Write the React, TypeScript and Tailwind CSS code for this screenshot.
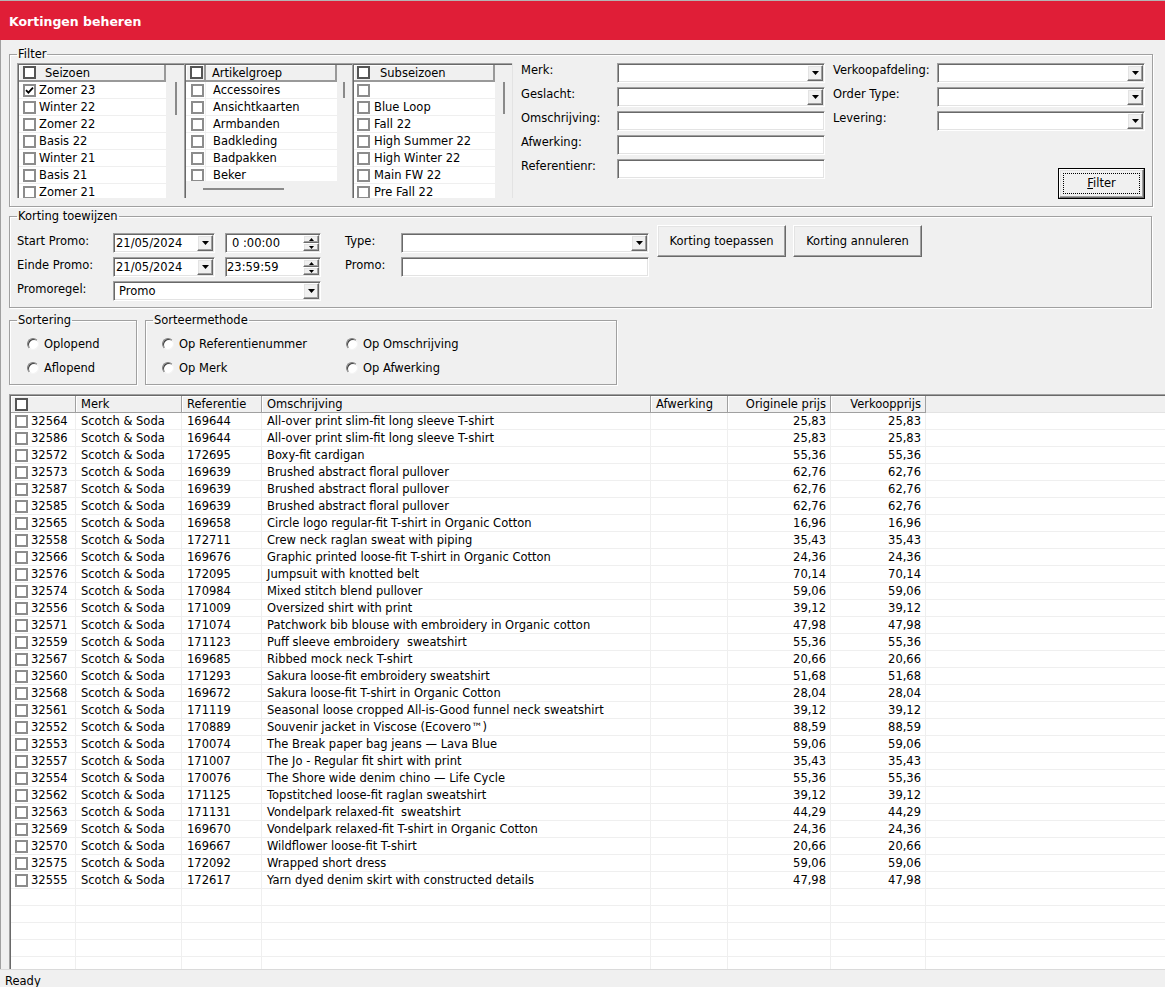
import React from "react";

const sunken =
  "border border-t-[#a0a0a0] border-l-[#a0a0a0] border-b-white border-r-white shadow-[inset_1px_1px_0_#696969,inset_-1px_-1px_0_#e3e3e3]";
const raised =
  "border border-t-white border-l-white border-b-[#696969] border-r-[#696969] shadow-[inset_-1px_-1px_0_#a0a0a0,inset_1px_1px_0_#e3e3e3]";
const group =
  "border border-[#a0a0a0] shadow-[inset_1px_1px_0_#ffffff,1px_1px_0_#ffffff] shrink-0 min-w-0";

function Arrow() {
  return (
    <div className={`w-[16px] h-[16px] shrink-0 bg-[#f0f0f0] ${raised} flex items-center justify-center`}>
      <svg width="7" height="4" viewBox="0 0 7 4">
        <path d="M0 0H7L3.5 4Z" fill="#000" />
      </svg>
    </div>
  );
}

function Combo({ w, value = "", pl = "pl-[3px]" }: { w: string; value?: string; pl?: string }) {
  return (
    <div className={`h-[20px] ${w} shrink-0 bg-white ${sunken} flex items-center pr-[1px]`}>
      <span className={`flex-1 ${pl} whitespace-nowrap overflow-hidden`}>{value}</span>
      <Arrow />
    </div>
  );
}

function TextBox({ w }: { w: string }) {
  return <div className={`h-[20px] ${w} shrink-0 bg-white ${sunken}`} />;
}

function Spin() {
  return (
    <div className="flex flex-col shrink-0">
      <div className={`w-[16px] h-[8px] bg-[#f0f0f0] ${raised} flex items-center justify-center`}>
        <svg width="5" height="3" viewBox="0 0 5 3">
          <path d="M0 3H5L2.5 0Z" fill="#000" />
        </svg>
      </div>
      <div className={`w-[16px] h-[8px] bg-[#f0f0f0] ${raised} flex items-center justify-center`}>
        <svg width="5" height="3" viewBox="0 0 5 3">
          <path d="M0 0H5L2.5 3Z" fill="#000" />
        </svg>
      </div>
    </div>
  );
}

function TimeField({ value, pl }: { value: string; pl: string }) {
  return (
    <div className={`h-[20px] w-[96px] shrink-0 bg-white ${sunken} flex items-center pr-[1px]`}>
      <span className={`flex-1 ${pl} whitespace-nowrap`}>{value}</span>
      <Spin />
    </div>
  );
}

function Check({ checked = false, dark = false }: { checked?: boolean; dark?: boolean }) {
  return (
    <div
      className={`w-[13px] h-[13px] shrink-0 bg-white border-2 ${
        dark ? "border-[#555555]" : "border-[#8c8c8c]"
      } flex items-center justify-center`}
    >
      {checked && (
        <svg width="9" height="9" viewBox="0 0 9 9">
          <path d="M1 4.2L3.4 6.6L8 1.6" stroke="#000" strokeWidth="1.8" fill="none" />
        </svg>
      )}
    </div>
  );
}

function Radio({ label }: { label: string }) {
  return (
    <div className="h-[16px] flex items-center gap-[5px] whitespace-nowrap">
      <div className="w-[12px] h-[12px] rounded-full bg-white border border-t-[#808080] border-l-[#808080] border-b-[#f4f4f4] border-r-[#f4f4f4] shadow-[inset_1px_1px_0_#404040]" />
      <span>{label}</span>
    </div>
  );
}

function WinButton({ label, w }: { label: string; w: string }) {
  return (
    <div className={`${w} h-[32px] shrink-0 bg-[#f0f0f0] ${raised} flex items-center justify-center`}>
      {label}
    </div>
  );
}

type LBProps = {
  w: string;
  title: string;
  items: string[];
  checkedIndex?: number;
  sep?: boolean;
  hScroll?: boolean;
  scrollW: string;
  thumbPl: string;
  thumbH: string;
  rowPl: string;
  textGap: string;
  headPl: string;
  headGap: string;
};

function ListBox(p: LBProps) {
  return (
    <div className={`${p.w} h-full shrink-0 flex border-t border-l border-[#a0a0a0]`}>
      <div className="flex-1 flex border-t border-l border-[#696969] min-w-0">
        <div className="flex-1 min-w-0 flex flex-col">
          <div className="h-[17px] shrink-0 flex items-stretch bg-[#f0f0f0] border-r-2 border-b-2 border-[#999999] shadow-[inset_1px_1px_0_#ffffff]">
            {p.sep ? (
              <>
                <div className="w-[20px] shrink-0 flex items-center pl-[4px] border-r-2 border-[#999999]">
                  <Check dark />
                </div>
                <div className="flex items-center pl-[6px] pt-[1px]">{p.title}</div>
              </>
            ) : (
              <div className={`flex items-center ${p.headPl} ${p.headGap}`}>
                <Check dark />
                <span className="pt-[1px]">{p.title}</span>
              </div>
            )}
          </div>
          <div className={`${p.hScroll ? "h-[99px]" : "flex-1"} min-h-0 overflow-hidden bg-white`}>
            {p.items.map((it, i) =>
              p.sep ? (
                <div key={i} className="h-[17px] flex items-stretch border-b border-[#efefef]">
                  <div className="w-[20px] shrink-0 flex items-center pl-[5px] border-r border-[#efefef]">
                    <Check checked={p.checkedIndex === i} />
                  </div>
                  <div className="flex items-center pl-[7px] whitespace-nowrap">{it}</div>
                </div>
              ) : (
                <div
                  key={i}
                  className={`h-[17px] flex items-center ${p.rowPl} ${p.textGap} border-b border-[#efefef] whitespace-nowrap`}
                >
                  <Check checked={p.checkedIndex === i} />
                  <span>{it}</span>
                </div>
              )
            )}
          </div>
          {p.hScroll && (
            <div className="flex-1 bg-[#f0f0f0] pt-[7px] pl-[17px]">
              <div className="w-[81px] h-[2px] bg-[#8a8a8a]" />
            </div>
          )}
        </div>
        <div className={`${p.scrollW} shrink-0 bg-[#f0f0f0] pt-[17px] ${p.thumbPl}`}>
          <div className={`w-[2px] ${p.thumbH} bg-[#8a8a8a]`} />
        </div>
      </div>
    </div>
  );
}

const rows: [string, string, string, string, string][] = [
  ["32564", "169644", "All-over print slim-fit long sleeve T-shirt", "25,83", "25,83"],
  ["32586", "169644", "All-over print slim-fit long sleeve T-shirt", "25,83", "25,83"],
  ["32572", "172695", "Boxy-fit cardigan", "55,36", "55,36"],
  ["32573", "169639", "Brushed abstract floral pullover", "62,76", "62,76"],
  ["32587", "169639", "Brushed abstract floral pullover", "62,76", "62,76"],
  ["32585", "169639", "Brushed abstract floral pullover", "62,76", "62,76"],
  ["32565", "169658", "Circle logo regular-fit T-shirt in Organic Cotton", "16,96", "16,96"],
  ["32558", "172711", "Crew neck raglan sweat with piping", "35,43", "35,43"],
  ["32566", "169676", "Graphic printed loose-fit T-shirt in Organic Cotton", "24,36", "24,36"],
  ["32576", "172095", "Jumpsuit with knotted belt", "70,14", "70,14"],
  ["32574", "170984", "Mixed stitch blend pullover", "59,06", "59,06"],
  ["32556", "171009", "Oversized shirt with print", "39,12", "39,12"],
  ["32571", "171074", "Patchwork bib blouse with embroidery in Organic cotton", "47,98", "47,98"],
  ["32559", "171123", "Puff sleeve embroidery  sweatshirt", "55,36", "55,36"],
  ["32567", "169685", "Ribbed mock neck T-shirt", "20,66", "20,66"],
  ["32560", "171293", "Sakura loose-fit embroidery sweatshirt", "51,68", "51,68"],
  ["32568", "169672", "Sakura loose-fit T-shirt in Organic Cotton", "28,04", "28,04"],
  ["32561", "171119", "Seasonal loose cropped All-is-Good funnel neck sweatshirt", "39,12", "39,12"],
  ["32552", "170889", "Souvenir jacket in Viscose (Ecovero™)", "88,59", "88,59"],
  ["32553", "170074", "The Break paper bag jeans — Lava Blue", "59,06", "59,06"],
  ["32557", "171007", "The Jo - Regular fit shirt with print", "35,43", "35,43"],
  ["32554", "170076", "The Shore wide denim chino — Life Cycle", "55,36", "55,36"],
  ["32562", "171125", "Topstitched loose-fit raglan sweatshirt", "39,12", "39,12"],
  ["32563", "171131", "Vondelpark relaxed-fit  sweatshirt", "44,29", "44,29"],
  ["32569", "169670", "Vondelpark relaxed-fit T-shirt in Organic Cotton", "24,36", "24,36"],
  ["32570", "169667", "Wildflower loose-fit T-shirt", "20,66", "20,66"],
  ["32575", "172092", "Wrapped short dress", "59,06", "59,06"],
  ["32555", "172617", "Yarn dyed denim skirt with constructed details", "47,98", "47,98"],
];

const cell = "h-full shrink-0 border-r border-[#efefef] flex items-center whitespace-pre overflow-hidden";
const head =
  "h-full shrink-0 border-r border-b border-[#a0a0a0] shadow-[inset_1px_1px_0_#ffffff] flex items-center whitespace-nowrap";

export default function App() {
  return (
    <div className="w-full h-[987px] flex flex-col bg-[#f0f0f0] font-['DejaVu_Sans',sans-serif] text-[11.5px] leading-[13px] text-black overflow-hidden">
      {/* title */}
      <div className="h-[40px] shrink-0 bg-[#e01e37] border-t border-[#b4b4b4] flex items-center pl-[9px] pt-[2px]">
        <span className="text-white font-bold text-[12.5px] leading-[16px]">Kortingen beheren</span>
      </div>

      <div className="flex-1 min-h-0 flex flex-col border-l border-[#a0a0a0] pl-[8px]">
        {/* Filter */}
        <fieldset className={`mt-[8px] w-[1144px] h-[159px] ${group}`}>
          <legend className="ml-[7px] px-[1px] leading-[13px]">Filter</legend>
          <div className="flex items-start pl-[7px] pt-[2px]">
            <div className="flex h-[135px] shrink-0 border-r border-[#e3e3e3]">
              <ListBox
                w="w-[167px]"
                title="Seizoen"
                items={["Zomer 23", "Winter 22", "Zomer 22", "Basis 22", "Winter 21", "Basis 21", "Zomer 21"]}
                checkedIndex={0}
                scrollW="w-[18px]"
                thumbPl="pl-[9px]"
                thumbH="h-[33px]"
                rowPl="pl-[4px]"
                textGap="gap-[3px]"
                headPl="pl-[4px]"
                headGap="gap-[9px]"
              />
              <ListBox
                w="w-[168px]"
                title="Artikelgroep"
                items={["Accessoires", "Ansichtkaarten", "Armbanden", "Badkleding", "Badpakken", "Beker"]}
                sep
                hScroll
                scrollW="w-[15px]"
                thumbPl="pl-[6px]"
                thumbH="h-[16px]"
                rowPl="pl-[5px]"
                textGap="gap-[3px]"
                headPl="pl-[4px]"
                headGap="gap-[9px]"
              />
              <ListBox
                w="w-[160px]"
                title="Subseizoen"
                items={["", "Blue Loop", "Fall 22", "High Summer 22", "High Winter 22", "Main FW 22", "Pre Fall 22"]}
                scrollW="w-[17px]"
                thumbPl="pl-[8px]"
                thumbH="h-[32px]"
                rowPl="pl-[3px]"
                textGap="gap-[4px]"
                headPl="pl-[3px]"
                headGap="gap-[10px]"
              />
            </div>

            <div className="ml-[8px] flex">
              <div className="w-[304px] flex flex-col gap-[4px]">
                <div className="flex items-start">
                  <div className="w-[96px] shrink-0 pt-[1px]">Merk:</div>
                  <Combo w="w-[208px]" />
                </div>
                <div className="flex items-start">
                  <div className="w-[96px] shrink-0 pt-[1px]">Geslacht:</div>
                  <Combo w="w-[208px]" />
                </div>
                <div className="flex items-start">
                  <div className="w-[96px] shrink-0 pt-[1px]">Omschrijving:</div>
                  <TextBox w="w-[208px]" />
                </div>
                <div className="flex items-start">
                  <div className="w-[96px] shrink-0 pt-[1px]">Afwerking:</div>
                  <TextBox w="w-[208px]" />
                </div>
                <div className="flex items-start">
                  <div className="w-[96px] shrink-0 pt-[1px]">Referentienr:</div>
                  <TextBox w="w-[208px]" />
                </div>
              </div>
              <div className="ml-[8px] w-[312px] flex flex-col">
                <div className="flex flex-col gap-[4px]">
                  <div className="flex items-start">
                    <div className="w-[104px] shrink-0 whitespace-nowrap pt-[1px]">Verkoopafdeling:</div>
                    <Combo w="w-[208px]" />
                  </div>
                  <div className="flex items-start">
                    <div className="w-[104px] shrink-0 pt-[1px]">Order Type:</div>
                    <Combo w="w-[208px]" />
                  </div>
                  <div className="flex items-start">
                    <div className="w-[104px] shrink-0 pt-[1px]">Levering:</div>
                    <Combo w="w-[208px]" />
                  </div>
                </div>
                <div className="mt-[37px] self-end w-[87px] h-[31px] border border-black bg-[#f0f0f0]">
                  <div className={`w-full h-full ${raised} p-[3px]`}>
                    <div className="w-full h-full border border-dotted border-black flex items-center justify-center">
                      <span>
                        <span className="underline">F</span>ilter
                      </span>
                    </div>
                  </div>
                </div>
              </div>
            </div>
          </div>
        </fieldset>

        {/* Korting toewijzen */}
        <fieldset className={`mt-[3px] w-[1143px] h-[98px] ${group}`}>
          <legend className="ml-[7px] px-[1px] leading-[13px]">Korting toewijzen</legend>
          <div className="flex items-start pl-[7px]">
            <div className="flex flex-col gap-[4px] pt-[10px]">
              <div className="flex items-start">
                <div className="w-[96px] shrink-0 pt-[2px]">Start Promo:</div>
                <Combo w="w-[102px]" value="21/05/2024" pl="pl-[2px]" />
                <div className="ml-[10px]">
                  <TimeField value="0 :00:00" pl="pl-[6px]" />
                </div>
                <div className="ml-[24px] w-[56px] shrink-0 pt-[2px]">Type:</div>
                <Combo w="w-[248px]" />
              </div>
              <div className="flex items-start">
                <div className="w-[96px] shrink-0 pt-[2px]">Einde Promo:</div>
                <Combo w="w-[102px]" value="21/05/2024" pl="pl-[2px]" />
                <div className="ml-[10px]">
                  <TimeField value="23:59:59" pl="pl-[1px]" />
                </div>
                <div className="ml-[24px] w-[56px] shrink-0 pt-[2px]">Promo:</div>
                <TextBox w="w-[248px]" />
              </div>
              <div className="flex items-start">
                <div className="w-[96px] shrink-0 pt-[2px]">Promoregel:</div>
                <Combo w="w-[208px]" value="Promo" pl="pl-[5px]" />
              </div>
            </div>
            <div className="ml-[8px] mt-[2px] flex gap-[7px]">
              <WinButton label="Korting toepassen" w="w-[129px]" />
              <WinButton label="Korting annuleren" w="w-[129px]" />
            </div>
          </div>
        </fieldset>

        {/* Sortering */}
        <div className="mt-[6px] flex gap-[8px] shrink-0">
          <fieldset className={`w-[128px] h-[71px] ${group}`}>
            <legend className="ml-[7px] px-[1px] leading-[13px]">Sortering</legend>
            <div className="flex flex-col gap-[8px] pt-[9px] pl-[17px]">
              <Radio label="Oplopend" />
              <Radio label="Aflopend" />
            </div>
          </fieldset>
          <fieldset className={`w-[472px] h-[71px] ${group}`}>
            <legend className="ml-[7px] px-[1px] leading-[13px]">Sorteermethode</legend>
            <div className="grid grid-cols-[184px_auto] gap-y-[8px] pt-[9px] pl-[16px]">
              <Radio label="Op Referentienummer" />
              <Radio label="Op Omschrijving" />
              <Radio label="Op Merk" />
              <Radio label="Op Afwerking" />
            </div>
          </fieldset>
        </div>

        {/* Table */}
        <div className="mt-[9px] flex-1 min-h-0 flex border-t border-l border-[#a0a0a0] overflow-hidden">
          <div className="flex-1 min-w-0 flex flex-col border-t border-l border-[#696969] bg-white overflow-hidden">
            <div className="h-[17px] shrink-0 flex bg-[#f0f0f0]">
              <div className={`${head} w-[65px] pl-[4px]`}>
                <Check dark />
              </div>
              <div className={`${head} w-[106px] pl-[5px]`}>Merk</div>
              <div className={`${head} w-[80px] pl-[5px]`}>Referentie</div>
              <div className={`${head} w-[389px] pl-[5px]`}>Omschrijving</div>
              <div className={`${head} w-[77px] pl-[5px]`}>Afwerking</div>
              <div className={`${head} w-[103px] justify-end pr-[4px]`}>Originele prijs</div>
              <div className={`${head} w-[95px] justify-end pr-[4px]`}>Verkoopprijs</div>
              <div className="flex-1 h-full border-b border-[#e3e3e3]" />
            </div>
            <div className="flex-1 min-h-0 overflow-hidden">
              {rows.map((r) => (
                <div key={r[0]} className="h-[17px] flex border-b border-[#efefef]">
                  <div className={`${cell} w-[65px] pl-[4px] gap-[3px]`}>
                    <Check />
                    <span>{r[0]}</span>
                  </div>
                  <div className={`${cell} w-[106px] pl-[5px]`}>Scotch &amp; Soda</div>
                  <div className={`${cell} w-[80px] pl-[5px]`}>{r[1]}</div>
                  <div className={`${cell} w-[389px] pl-[5px]`}>{r[2]}</div>
                  <div className={`${cell} w-[77px]`} />
                  <div className={`${cell} w-[103px] justify-end pr-[4px]`}>{r[3]}</div>
                  <div className={`${cell} w-[95px] justify-end pr-[4px]`}>{r[4]}</div>
                  <div className="flex-1" />
                </div>
              ))}
              {[0, 1, 2, 3, 4, 5].map((i) => (
                <div key={"e" + i} className="h-[17px] flex border-b border-[#efefef]">
                  <div className={`${cell} w-[65px]`} />
                  <div className={`${cell} w-[106px]`} />
                  <div className={`${cell} w-[80px]`} />
                  <div className={`${cell} w-[389px]`} />
                  <div className={`${cell} w-[77px]`} />
                  <div className={`${cell} w-[103px]`} />
                  <div className={`${cell} w-[95px]`} />
                  <div className="flex-1" />
                </div>
              ))}
            </div>
          </div>
        </div>
      </div>

      {/* status bar */}
      <div className="h-[18px] shrink-0 border-t border-[#dadada] pt-[5px] pl-[5px]">Ready</div>
    </div>
  );
}
